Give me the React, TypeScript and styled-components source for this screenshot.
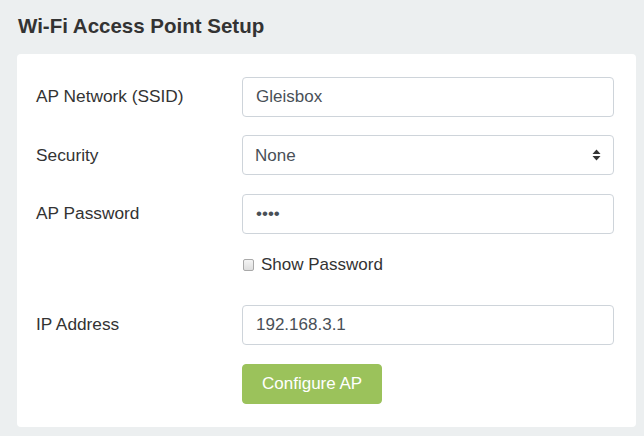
import React, { useState } from "react";
import styled, { createGlobalStyle } from "styled-components";

const GlobalStyle = createGlobalStyle`
  html, body {
    margin: 0;
    padding: 0;
    background: #eceff0;
  }
  body {
    font-family: "Liberation Sans", Arial, sans-serif;
  }
`;

const Page = styled.div`
  padding: 14px 8px 0 17px;
`;

const Title = styled.h1`
  margin: 0 0 15px 1px;
  font-size: 20.5px;
  line-height: 24.6px;
  font-weight: bold;
  color: #333;
`;

const Card = styled.form`
  background: #fff;
  border-radius: 4px;
  padding: 23px 22px 23px 19px;
  display: flex;
  flex-direction: column;
  gap: 18.5px;
`;

const Row = styled.div<{ $tall?: boolean }>`
  display: grid;
  grid-template-columns: 206px 1fr;
  align-items: ${(p) => (p.$tall ? "start" : "center")};
  min-height: ${(p) => (p.$tall ? "34px" : "40px")};
`;

const ActionRow = styled(Row)`
  margin-top: 1px;
`;

const Label = styled.label`
  font-size: 17.3px;
  color: #333;
`;

const Field = styled.div`
  position: relative;
`;

const Input = styled.input`
  box-sizing: border-box;
  width: 100%;
  height: 40px;
  padding: 0 13px;
  font-family: inherit;
  font-size: 17px;
  color: #495057;
  background: #fff;
  border: 1px solid #ced4da;
  border-radius: 4px;
  outline: none;
`;

const Select = styled.select`
  box-sizing: border-box;
  width: 100%;
  height: 40px;
  padding: 0 12px;
  font-family: inherit;
  font-size: 17px;
  color: #495057;
  background: #fff;
  border: 1px solid #ced4da;
  border-radius: 4px;
  appearance: none;
  outline: none;
`;

const Arrows = styled.svg`
  position: absolute;
  right: 13px;
  top: 14px;
  pointer-events: none;
`;

const CheckLine = styled.label`
  display: flex;
  align-items: center;
  gap: 7px;
  padding: 1px 0 0 1px;
  font-size: 17px;
  line-height: 24px;
  color: #333;
`;

const Box = styled.span`
  box-sizing: border-box;
  width: 11px;
  height: 12px;
  border: 1px solid #a9a9a9;
  border-radius: 2px;
  background: linear-gradient(#f4f4f4, #dedede);
`;

const Button = styled.button`
  justify-self: start;
  height: 40px;
  padding: 0 19px;
  font-family: inherit;
  font-size: 17px;
  color: #fff;
  background: #9bc25b;
  border: 1px solid #9bc25b;
  border-radius: 4px;
`;

export default function App() {
  const [show, setShow] = useState(false);
  return (
    <>
      <GlobalStyle />
      <Page>
        <Title>Wi-Fi Access Point Setup</Title>
        <Card onSubmit={(e) => e.preventDefault()}>
          <Row>
            <Label>AP Network (SSID)</Label>
            <Input defaultValue="Gleisbox" />
          </Row>
          <Row>
            <Label>Security</Label>
            <Field>
              <Select defaultValue="none">
                <option value="none">None</option>
                <option value="wpa2">WPA2</option>
              </Select>
              <Arrows width="9" height="12" viewBox="0 0 9 12">
                <path d="M4.5 0.5 L8.5 5 L0.5 5 Z" fill="#333" />
                <path d="M0.5 7 L8.5 7 L4.5 11.5 Z" fill="#333" />
              </Arrows>
            </Field>
          </Row>
          <Row>
            <Label>AP Password</Label>
            <Input type={show ? "text" : "password"} defaultValue="1234" />
          </Row>
          <Row $tall>
            <span />
            <CheckLine onClick={() => setShow(!show)}>
              <Box />
              Show Password
            </CheckLine>
          </Row>
          <Row>
            <Label>IP Address</Label>
            <Input defaultValue="192.168.3.1" />
          </Row>
          <ActionRow>
            <span />
            <Button type="submit">Configure AP</Button>
          </ActionRow>
        </Card>
      </Page>
    </>
  );
}
